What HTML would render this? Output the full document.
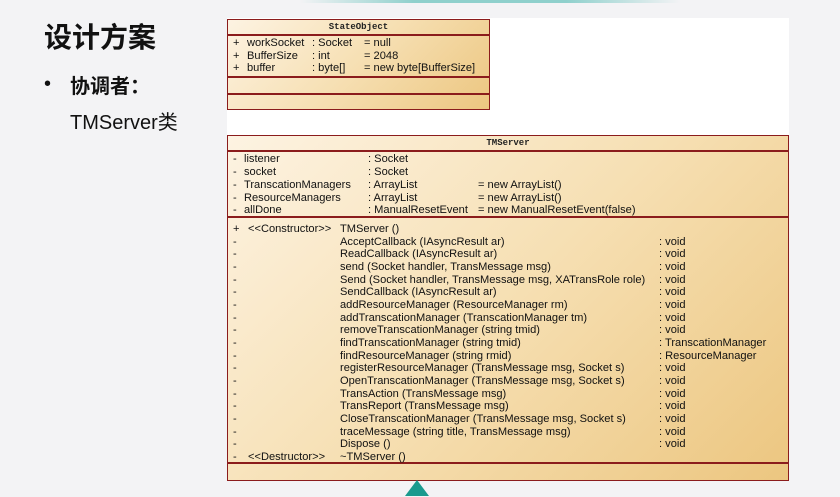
<!DOCTYPE html>
<html><head><meta charset="utf-8"><style>
*{margin:0;padding:0;box-sizing:border-box}
body{width:840px;height:494px;background:#f3f3f5;position:relative;overflow:hidden;font-family:"Liberation Sans","Noto Sans CJK SC",sans-serif}
.topline{position:absolute;left:300px;top:0;width:380px;height:3px;background:linear-gradient(90deg,rgba(120,200,200,0),#8fd0cc 30%,#8fd0cc 70%,rgba(120,200,200,0))}
.white{position:absolute;left:227px;top:18px;width:562px;height:118px;background:#fff}
.box{position:absolute;border:1.5px solid #8b1c1c;background:linear-gradient(135deg,#fdf3e2 0%,#f6dfb2 50%,#ecc680 100%)}
.hl{position:absolute;left:0;right:0;height:1.5px;background:#8b1c1c}
.t{position:absolute;font-size:11.1px;color:#111;white-space:nowrap;line-height:13px}
.title{position:absolute;left:0;right:0;text-align:center;font-family:"Liberation Mono",monospace;font-size:9px;font-weight:bold;color:#222}
.h1{position:absolute;left:44px;top:16px;font-size:28px;font-weight:bold;color:#111}
.b{position:absolute;left:44px;top:73px;font-size:20px;color:#111}
.h2{position:absolute;left:70px;top:70px;font-size:20px;font-weight:bold;color:#111}
.h3{position:absolute;left:70px;top:106px;font-size:20px;color:#111}
.tri{position:absolute;left:405px;top:480px;width:0;height:0;border-left:12px solid transparent;border-right:12px solid transparent;border-bottom:16px solid #1a9a8e}
.rows{position:absolute;left:0;top:1px;width:840px;height:494px}
.rows2{position:absolute;left:0;top:2px;width:840px;height:494px}
.rows3{position:absolute;left:0;top:3px;width:840px;height:494px}
</style></head><body>
<div class="topline"></div>
<div class="white"></div>
<div class="h1">设计方案</div>
<div class="b">•</div>
<div class="h2">协调者：</div>
<div class="h3">TMServer类</div>

<div class="box" style="left:227px;top:19px;width:263px;height:91px">
<div class="title" style="top:2px">StateObject</div>
<div class="hl" style="top:14px"></div>
<div class="hl" style="top:56px"></div>
<div class="hl" style="top:73px"></div>
</div>
<div class="rows">
<div class="t" style="left:233px;top:36px">+</div><div class="t" style="left:247px;top:36px">workSocket</div><div class="t" style="left:312px;top:36px">: Socket</div><div class="t" style="left:364px;top:36px">= null</div>
<div class="t" style="left:233px;top:49px">+</div><div class="t" style="left:247px;top:49px">BufferSize</div><div class="t" style="left:312px;top:49px">: int</div><div class="t" style="left:364px;top:49px">= 2048</div>
<div class="t" style="left:233px;top:61px">+</div><div class="t" style="left:247px;top:61px">buffer</div><div class="t" style="left:312px;top:61px">: byte[]</div><div class="t" style="left:364px;top:61px">= new byte[BufferSize]</div>
</div>

<div class="box" style="left:227px;top:135px;width:562px;height:346px">
<div class="title" style="top:2px">TMServer</div>
<div class="hl" style="top:14px"></div>
<div class="hl" style="top:80px"></div>
<div class="hl" style="top:326px"></div>
</div>
<div class="rows2">
<div class="t" style="left:233px;top:151px">-</div><div class="t" style="left:244px;top:151px">listener</div><div class="t" style="left:368px;top:151px">: Socket</div>
<div class="t" style="left:233px;top:164px">-</div><div class="t" style="left:244px;top:164px">socket</div><div class="t" style="left:368px;top:164px">: Socket</div>
<div class="t" style="left:233px;top:177px">-</div><div class="t" style="left:244px;top:177px">TranscationManagers</div><div class="t" style="left:368px;top:177px">: ArrayList</div><div class="t" style="left:478px;top:177px">= new ArrayList()</div>
<div class="t" style="left:233px;top:190px">-</div><div class="t" style="left:244px;top:190px">ResourceManagers</div><div class="t" style="left:368px;top:190px">: ArrayList</div><div class="t" style="left:478px;top:190px">= new ArrayList()</div>
<div class="t" style="left:233px;top:202px">-</div><div class="t" style="left:244px;top:202px">allDone</div><div class="t" style="left:368px;top:202px">: ManualResetEvent</div><div class="t" style="left:478px;top:202px">= new ManualResetEvent(false)</div>
</div>
<div class="rows3">
<div class="t" style="left:233px;top:220px">+</div><div class="t" style="left:248px;top:220px">&lt;&lt;Constructor&gt;&gt;</div><div class="t" style="left:340px;top:220px">TMServer ()</div>
<div class="t" style="left:233px;top:233px">-</div><div class="t" style="left:340px;top:233px">AcceptCallback (IAsyncResult ar)</div><div class="t" style="left:659px;top:233px">: void</div>
<div class="t" style="left:233px;top:245px">-</div><div class="t" style="left:340px;top:245px">ReadCallback (IAsyncResult ar)</div><div class="t" style="left:659px;top:245px">: void</div>
<div class="t" style="left:233px;top:258px">-</div><div class="t" style="left:340px;top:258px">send (Socket handler, TransMessage msg)</div><div class="t" style="left:659px;top:258px">: void</div>
<div class="t" style="left:233px;top:271px">-</div><div class="t" style="left:340px;top:271px">Send (Socket handler, TransMessage msg, XATransRole role)</div><div class="t" style="left:659px;top:271px">: void</div>
<div class="t" style="left:233px;top:283px">-</div><div class="t" style="left:340px;top:283px">SendCallback (IAsyncResult ar)</div><div class="t" style="left:659px;top:283px">: void</div>
<div class="t" style="left:233px;top:296px">-</div><div class="t" style="left:340px;top:296px">addResourceManager (ResourceManager rm)</div><div class="t" style="left:659px;top:296px">: void</div>
<div class="t" style="left:233px;top:309px">-</div><div class="t" style="left:340px;top:309px">addTranscationManager (TranscationManager tm)</div><div class="t" style="left:659px;top:309px">: void</div>
<div class="t" style="left:233px;top:321px">-</div><div class="t" style="left:340px;top:321px">removeTranscationManager (string tmid)</div><div class="t" style="left:659px;top:321px">: void</div>
<div class="t" style="left:233px;top:334px">-</div><div class="t" style="left:340px;top:334px">findTranscationManager (string tmid)</div><div class="t" style="left:659px;top:334px">: TranscationManager</div>
<div class="t" style="left:233px;top:347px">-</div><div class="t" style="left:340px;top:347px">findResourceManager (string rmid)</div><div class="t" style="left:659px;top:347px">: ResourceManager</div>
<div class="t" style="left:233px;top:359px">-</div><div class="t" style="left:340px;top:359px">registerResourceManager (TransMessage msg, Socket s)</div><div class="t" style="left:659px;top:359px">: void</div>
<div class="t" style="left:233px;top:372px">-</div><div class="t" style="left:340px;top:372px">OpenTranscationManager (TransMessage msg, Socket s)</div><div class="t" style="left:659px;top:372px">: void</div>
<div class="t" style="left:233px;top:385px">-</div><div class="t" style="left:340px;top:385px">TransAction (TransMessage msg)</div><div class="t" style="left:659px;top:385px">: void</div>
<div class="t" style="left:233px;top:397px">-</div><div class="t" style="left:340px;top:397px">TransReport (TransMessage msg)</div><div class="t" style="left:659px;top:397px">: void</div>
<div class="t" style="left:233px;top:410px">-</div><div class="t" style="left:340px;top:410px">CloseTranscationManager (TransMessage msg, Socket s)</div><div class="t" style="left:659px;top:410px">: void</div>
<div class="t" style="left:233px;top:423px">-</div><div class="t" style="left:340px;top:423px">traceMessage (string title, TransMessage msg)</div><div class="t" style="left:659px;top:423px">: void</div>
<div class="t" style="left:233px;top:435px">-</div><div class="t" style="left:340px;top:435px">Dispose ()</div><div class="t" style="left:659px;top:435px">: void</div>
<div class="t" style="left:233px;top:448px">-</div><div class="t" style="left:248px;top:448px">&lt;&lt;Destructor&gt;&gt;</div><div class="t" style="left:340px;top:448px">~TMServer ()</div>
</div>
<div class="tri"></div>
</body></html>
